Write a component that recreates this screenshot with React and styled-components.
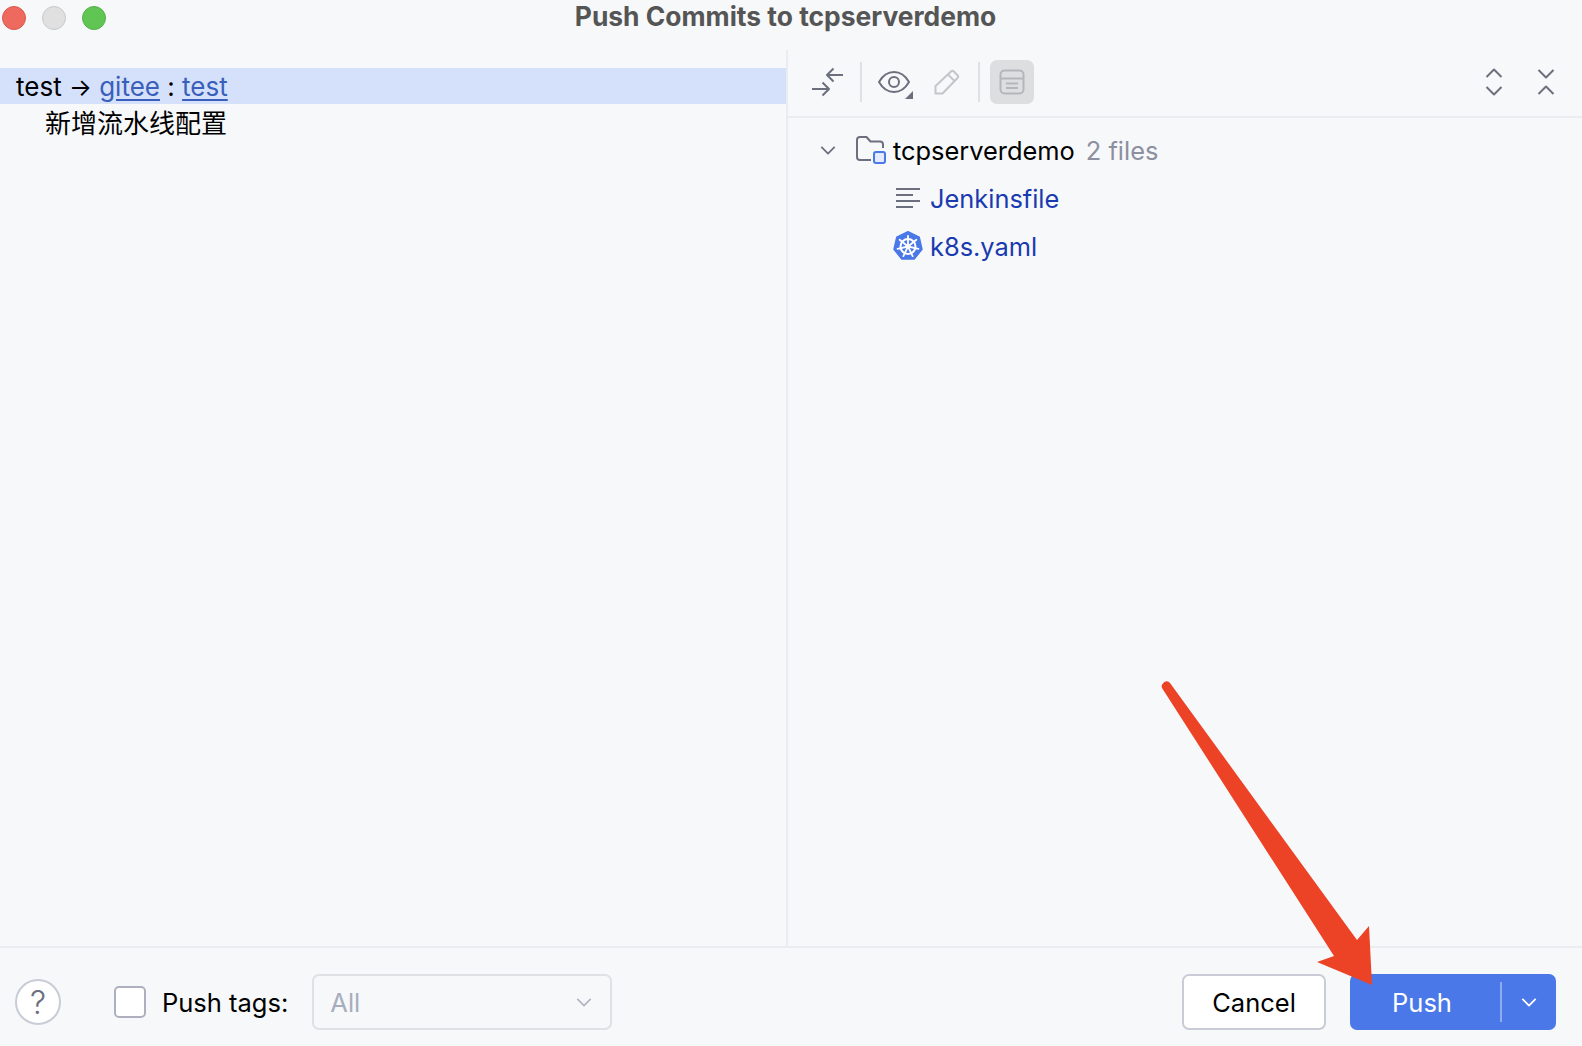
import React from "react"
import styled, { createGlobalStyle } from "styled-components"

const GlobalStyle = createGlobalStyle`
  html, body, #root {
    margin: 0;
    height: 100%;
  }

  body {
    background: #f7f8fa;
    font-family: Inter, "Noto Sans CJK SC", sans-serif;
    overflow: hidden;
  }
`

const Stroke = styled.svg`
  display: block;
  flex: none;
  fill: none;
  stroke: ${props => props.$color || "#6c707e"};
  stroke-width: ${props => props.$weight || 2};
  stroke-linecap: ${props => props.$cap || "butt"};
  stroke-linejoin: round;
`

const SwapIcon = () => (
  <Stroke width="34" height="30" viewBox="0 0 34 30">
    <path d="M32 8H16M22.500 1.500 16 8l6.500 6.500" />
    <path d="M1 22h17M11.500 15.500 18 22l-6.500 6.500" />
  </Stroke>
)

const EyeIcon = () => (
  <EyeWrap>
    <Stroke width="34" height="24" viewBox="0 0 34 24">
      <path d="M2 12C6 5 11 2 17 2s11 3 15 10c-4 7-9 10-15 10S6 19 2 12Z" />
      <circle cx="17" cy="12" r="5" />
    </Stroke>
    <Corner />
  </EyeWrap>
)

const PencilIcon = () => (
  <Stroke $color="#c4c5c8" width="26" height="26" viewBox="0 0 26 26">
    <path d="M1.500 24.500V17L17 2.500a2 2 0 0 1 2.800 0l3.700 3.700a2 2 0 0 1 0 2.800L8.500 24.500Z" />
    <path d="m14 5.500 6.500 6.500" />
  </Stroke>
)

const PreviewIcon = () => (
  <Stroke $color="#b4b6ba" width="26" height="26" viewBox="0 0 26 26">
    <rect x="1.500" y="1.500" width="23" height="23" rx="4" />
    <path d="M1.500 9.500h23M7 14.500h12M7 19h12" />
  </Stroke>
)

const ExpandIcon = () => (
  <Stroke width="18" height="28" viewBox="0 0 18 28">
    <path d="m1.500 9 7.500-7.500L16.500 9M1.500 19 9 26.500 16.500 19" />
  </Stroke>
)

const CollapseIcon = () => (
  <Stroke width="18" height="28" viewBox="0 0 18 28">
    <path d="m1.500 2 7.500 7.500L16.500 2M1.500 26 9 18.500 16.500 26" />
  </Stroke>
)

const Chevron = ({ color, width = 18, weight = 2 }) => (
  <Stroke $color={color} $weight={weight} width={width} height="11" viewBox="0 0 18 11">
    <path d="m1.500 1.500 7.500 7.500 7.500-7.500" />
  </Stroke>
)

const FolderIcon = () => (
  <FolderWrap>
    <Stroke $color="#6c707e" width="30" height="28" viewBox="0 0 30 28">
      <path d="M15 24H4a3 3 0 0 1-3-3V4a3 3 0 0 1 3-3h6.500l4 4.500H24a3 3 0 0 1 3 3V12" />
    </Stroke>
    <ModuleBadge />
  </FolderWrap>
)

const TextFileIcon = () => (
  <Stroke $weight={1.800} width="26" height="22" viewBox="0 0 26 22">
    <path d="M1 2h24M1 8h17M1 14h24M1 20h17" />
  </Stroke>
)

const spokes = [0, 51.4, 102.8, 154.3, 205.7, 257.1, 308.6]

const KubeIcon = () => (
  <svg width="30" height="30" viewBox="0 0 30 30">
    <path
      d="M15 .8 26.200 6.200 29 18.300 21.200 28H8.800L1 18.300 3.800 6.200Z"
      fill="#4a78e8"
      stroke="#4a78e8"
      strokeWidth="1.500"
      strokeLinejoin="round"
    />
    <circle cx="15" cy="15.500" r="7.500" fill="none" stroke="#fff" strokeWidth="2" />
    <circle cx="15" cy="15.500" r="2.200" fill="#fff" />
    {spokes.map(angle => (
      <path
        key={angle}
        d="M15 15.500V4.800"
        stroke="#fff"
        strokeWidth="1.800"
        strokeLinecap="round"
        transform={`rotate(${angle} 15 15.500)`}
      />
    ))}
  </svg>
)

const App = () => (
  <>
    <GlobalStyle />
    <Window>
      <TitleBar>
        <Lights>
          <Light $fill="#ee6a5f" $edge="#d9574d" />
          <Light $fill="#e0e0e0" $edge="#c9c9c9" />
          <Light $fill="#61c554" $edge="#52b046" />
        </Lights>
        <Title>Push Commits to tcpserverdemo</Title>
      </TitleBar>

      <Main>
        <CommitPane>
          <BranchRow>
            test <Arrow>→</Arrow> <BranchLink>gitee</BranchLink> : <BranchLink>test</BranchLink>
          </BranchRow>
          <CommitRow>新增流水线配置</CommitRow>
        </CommitPane>

        <FilesPane>
          <Toolbar>
            <ToolGroup>
              <SwapSlot>
                <SwapIcon />
              </SwapSlot>
              <ToolDivider />
              <EyeIcon />
              <PencilSlot>
                <PencilIcon />
              </PencilSlot>
              <ToolDivider />
              <ActiveTool>
                <PreviewIcon />
              </ActiveTool>
            </ToolGroup>
            <TreeActions>
              <ExpandIcon />
              <CollapseIcon />
            </TreeActions>
          </Toolbar>

          <Tree>
            <RootRow>
              <Chevron width={16} />
              <FolderIcon />
              <RootName>tcpserverdemo</RootName>
              <FileCount>2 files</FileCount>
            </RootRow>
            <FileRow>
              <FileIconSlot>
                <TextFileIcon />
              </FileIconSlot>
              <FileName>Jenkinsfile</FileName>
            </FileRow>
            <FileRow>
              <FileIconSlot>
                <KubeIcon />
              </FileIconSlot>
              <FileName>k8s.yaml</FileName>
            </FileRow>
          </Tree>
        </FilesPane>
      </Main>

      <Footer>
        <FooterLeft>
          <HelpButton>?</HelpButton>
          <CheckBox />
          <TagsLabel>Push tags:</TagsLabel>
          <TagsSelect>
            All
            <Chevron color="#b4b7c4" width={16} />
          </TagsSelect>
        </FooterLeft>
        <FooterRight>
          <CancelButton>Cancel</CancelButton>
          <PushButton>
            <PushLabel>Push</PushLabel>
            <PushMenu>
              <Chevron color="#fff" width={16} />
            </PushMenu>
          </PushButton>
        </FooterRight>
      </Footer>

      <Annotation width="1582" height="1046" viewBox="0 0 1582 1046">
        <path
          d="M1162 688a4 4 0 0 1 1-4.500 4 4 0 0 1 7-.500L1357 940l12-14 3 59-55-23 17-6Z"
          fill="#ec4226"
        />
      </Annotation>
    </Window>
  </>
)

export default App

const Window = styled.div`
  position: relative;
  display: flex;
  flex-direction: column;
  height: 100vh;
  background: #f7f8fa;
  color: #000;
`

const TitleBar = styled.header`
  position: relative;
  display: flex;
  justify-content: center;
  flex: none;
  height: 50px;
  padding-right: 11px;
`

const Lights = styled.div`
  position: absolute;
  top: 6px;
  left: 2px;
  display: flex;
  gap: 16px;
`

const Light = styled.span`
  width: 24px;
  height: 24px;
  box-sizing: border-box;
  border-radius: 50%;
  background: ${props => props.$fill};
  border: 1px solid ${props => props.$edge};
`

const Title = styled.h1`
  margin: 0;
  font-size: 26.4px;
  line-height: 32px;
  font-weight: 700;
  color: #555;
`

const Main = styled.main`
  display: flex;
  flex: 1;
  min-height: 0;
`

const CommitPane = styled.section`
  flex: none;
  width: 786px;
  padding-top: 18px;
  border-right: 2px solid #ebecf0;
  font-size: 26px;
`

const BranchRow = styled.div`
  height: 36px;
  line-height: 38px;
  padding-left: 16px;
  background: #d5e1fb;
  white-space: pre-wrap;
`

const Arrow = styled.span`
  font-size: 24px;
`

const BranchLink = styled.span`
  color: #3a5fba;
  text-decoration: underline;
  text-underline-offset: 3px;
`

const CommitRow = styled.div`
  height: 36px;
  line-height: 40px;
  padding-left: 45px;
`

const FilesPane = styled.section`
  flex: 1;
  min-width: 0;
`

const Toolbar = styled.div`
  display: flex;
  align-items: center;
  justify-content: space-between;
  height: 64px;
  padding: 0 27px 2px 23px;
  border-bottom: 2px solid #ebecf0;
  box-sizing: content-box;
`

const ToolGroup = styled.div`
  display: flex;
  align-items: center;
`

const SwapSlot = styled.div`
  width: 49px;
`

const ToolDivider = styled.span`
  width: 2px;
  height: 40px;
  background: #dfe1e5;
`

const EyeWrap = styled.div`
  position: relative;
  margin-left: 15px;
`

const Corner = styled.span`
  position: absolute;
  right: -2px;
  bottom: -5px;
  width: 0;
  height: 0;
  border-left: 8px solid transparent;
  border-bottom: 8px solid #6c707e;
`

const PencilSlot = styled.div`
  margin: 0 18px 0 23px;
`

const ActiveTool = styled.div`
  display: flex;
  align-items: center;
  justify-content: center;
  width: 44px;
  height: 44px;
  margin-left: 10px;
  border-radius: 7px;
  background: #dcdee0;
`

const TreeActions = styled.div`
  display: flex;
  gap: 34px;
`

const Tree = styled.div`
  display: flex;
  flex-direction: column;
  padding-top: 8px;
  font-size: 25.4px;
`

const RootRow = styled.div`
  display: flex;
  align-items: center;
  height: 48px;
  padding-left: 32px;
`

const FolderWrap = styled.div`
  position: relative;
  margin: 0 7px 0 20px;
`

const ModuleBadge = styled.span`
  position: absolute;
  right: 0;
  bottom: 0;
  width: 9px;
  height: 9px;
  border: 2px solid #4a78e8;
  border-radius: 3px;
  background: #e3ebfc;
`

const RootName = styled.span``

const FileCount = styled.span`
  margin-left: 11px;
  color: #8c8f9f;
`

const FileRow = styled.div`
  display: flex;
  align-items: center;
  height: 48px;
  padding-left: 105px;
`

const FileIconSlot = styled.div`
  display: flex;
  justify-content: center;
  width: 30px;
  margin-right: 7px;
`

const FileName = styled.span`
  color: #1a3ab0;
`

const Footer = styled.footer`
  display: flex;
  align-items: center;
  justify-content: space-between;
  flex: none;
  height: 100px;
  padding: 10px 26px 0 15px;
  box-sizing: border-box;
  border-top: 2px solid #ebecf0;
  font-size: 25.5px;
`

const FooterLeft = styled.div`
  display: flex;
  align-items: center;
`

const HelpButton = styled.div`
  display: flex;
  align-items: center;
  justify-content: center;
  width: 42px;
  height: 42px;
  border: 2px solid #c9ccd6;
  border-radius: 50%;
  background: #fff;
  color: #6c707e;
  font-size: 32px;
  font-weight: 300;
`

const CheckBox = styled.div`
  width: 28px;
  height: 28px;
  margin-left: 53px;
  border: 2px solid #aeb0c0;
  border-radius: 5px;
  background: #fff;
`

const TagsLabel = styled.span`
  margin-left: 16px;
`

const TagsSelect = styled.div`
  display: flex;
  align-items: center;
  justify-content: space-between;
  width: 300px;
  height: 56px;
  margin-left: 24px;
  padding: 0 18px 0 16px;
  box-sizing: border-box;
  border: 2px solid #dfe1e5;
  border-radius: 7px;
  color: #a8adbd;
`

const FooterRight = styled.div`
  display: flex;
  align-items: center;
  gap: 24px;
`

const CancelButton = styled.div`
  display: flex;
  align-items: center;
  justify-content: center;
  width: 144px;
  height: 56px;
  box-sizing: border-box;
  border: 2px solid #c9ccd6;
  border-radius: 7px;
  background: #fff;
`

const PushButton = styled.div`
  display: flex;
  align-items: center;
  width: 206px;
  height: 56px;
  border-radius: 7px;
  background: #4a78e8;
  color: #fff;
`

const PushLabel = styled.span`
  flex: 1;
  padding-right: 6px;
  text-align: center;
`

const PushMenu = styled.div`
  display: flex;
  align-items: center;
  justify-content: center;
  width: 54px;
  height: 40px;
  border-left: 2px solid #8fabf0;
`

const Annotation = styled.svg`
  position: absolute;
  top: 0;
  left: 0;
  pointer-events: none;
`
